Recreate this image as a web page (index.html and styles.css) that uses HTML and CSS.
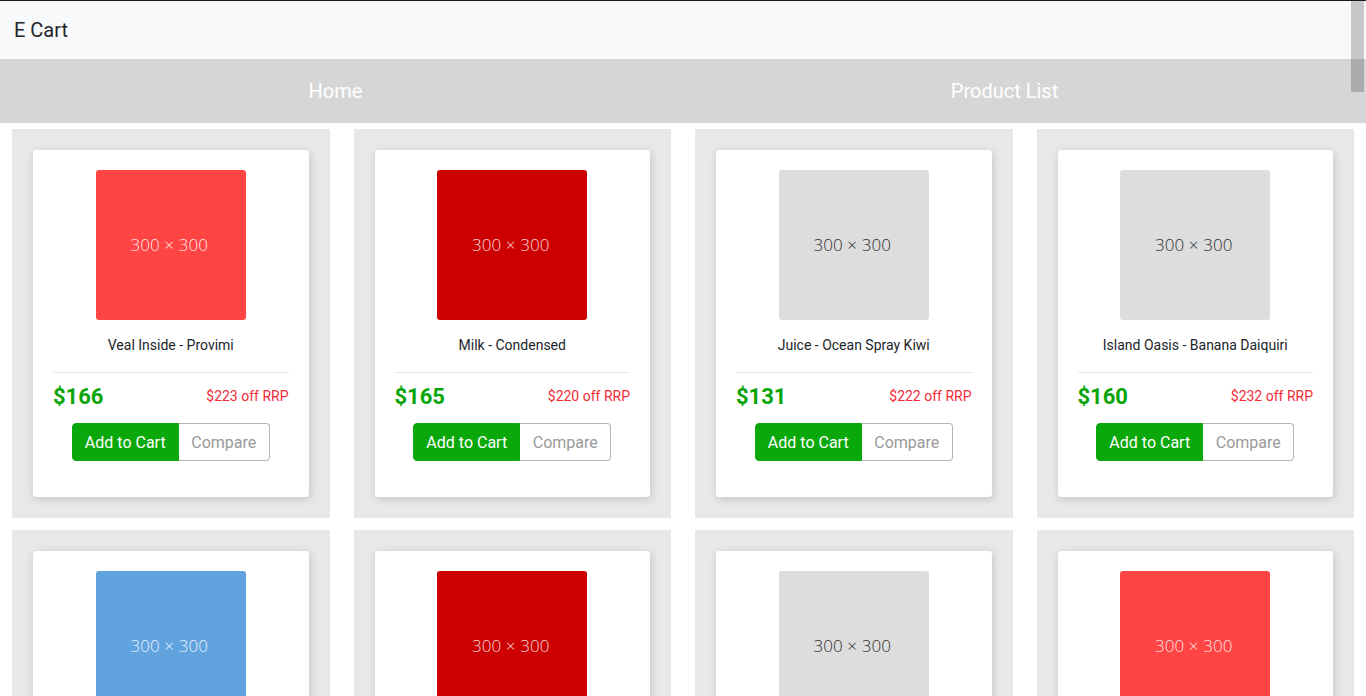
FILE: index.html
```html
<!DOCTYPE html>
<html lang="en">
<head>
<meta charset="utf-8">
<title>E Cart</title>
<link rel="stylesheet" href="styles.css">
</head>
<body>
<div class="top-line"></div>
<header class="navbar">
  <span class="brand">E Cart</span>
</header>
<nav class="menu">
  <a class="menu-item" href="#">Home</a>
  <a class="menu-item" href="#">Product List</a>
</nav>
<div class="scroll-overlay"></div>
<main class="products">
  <div class="tile"><div class="card">
    <div class="thumb thumb-red">300 × 300</div>
    <div class="title">Veal Inside - Provimi</div>
    <div class="divider"></div>
    <div class="price-row"><span class="price">$166</span><span class="off">$223 off RRP</span></div>
    <div class="btns"><button class="btn-cart">Add to Cart</button><button class="btn-compare">Compare</button></div>
  </div></div>
  <div class="tile"><div class="card">
    <div class="thumb thumb-dark">300 × 300</div>
    <div class="title">Milk - Condensed</div>
    <div class="divider"></div>
    <div class="price-row"><span class="price">$165</span><span class="off">$220 off RRP</span></div>
    <div class="btns"><button class="btn-cart">Add to Cart</button><button class="btn-compare">Compare</button></div>
  </div></div>
  <div class="tile"><div class="card">
    <div class="thumb thumb-gray">300 × 300</div>
    <div class="title">Juice - Ocean Spray Kiwi</div>
    <div class="divider"></div>
    <div class="price-row"><span class="price">$131</span><span class="off">$222 off RRP</span></div>
    <div class="btns"><button class="btn-cart">Add to Cart</button><button class="btn-compare">Compare</button></div>
  </div></div>
  <div class="tile"><div class="card">
    <div class="thumb thumb-gray">300 × 300</div>
    <div class="title">Island Oasis - Banana Daiquiri</div>
    <div class="divider"></div>
    <div class="price-row"><span class="price">$160</span><span class="off">$232 off RRP</span></div>
    <div class="btns"><button class="btn-cart">Add to Cart</button><button class="btn-compare">Compare</button></div>
  </div></div>
  <div class="tile"><div class="card">
    <div class="thumb thumb-blue">300 × 300</div>
    <div class="title">Wine - Red, Merlot</div>
    <div class="divider"></div>
    <div class="price-row"><span class="price">$142</span><span class="off">$210 off RRP</span></div>
    <div class="btns"><button class="btn-cart">Add to Cart</button><button class="btn-compare">Compare</button></div>
  </div></div>
  <div class="tile"><div class="card">
    <div class="thumb thumb-dark">300 × 300</div>
    <div class="title">Bread - Multigrain</div>
    <div class="divider"></div>
    <div class="price-row"><span class="price">$118</span><span class="off">$205 off RRP</span></div>
    <div class="btns"><button class="btn-cart">Add to Cart</button><button class="btn-compare">Compare</button></div>
  </div></div>
  <div class="tile"><div class="card">
    <div class="thumb thumb-gray">300 × 300</div>
    <div class="title">Cheese - Cheddar</div>
    <div class="divider"></div>
    <div class="price-row"><span class="price">$150</span><span class="off">$228 off RRP</span></div>
    <div class="btns"><button class="btn-cart">Add to Cart</button><button class="btn-compare">Compare</button></div>
  </div></div>
  <div class="tile"><div class="card">
    <div class="thumb thumb-red">300 × 300</div>
    <div class="title">Pasta - Penne</div>
    <div class="divider"></div>
    <div class="price-row"><span class="price">$127</span><span class="off">$219 off RRP</span></div>
    <div class="btns"><button class="btn-cart">Add to Cart</button><button class="btn-compare">Compare</button></div>
  </div></div>
</main>
</body>
</html>
```
FILE: styles.css
```css
html, body {
  margin: 0;
  padding: 0;
  overflow: hidden;
  background: #ffffff;
  font-family: Roboto, "Liberation Sans", Arial, sans-serif;
  color: #212529;
}

.top-line {
  height: 1px;
  background: #1b1b1b;
}

.navbar {
  height: 58px;
  background: #f8f9fa;
  display: flex;
  align-items: center;
  padding-left: 14px;
}

.brand {
  font-size: 20px;
  line-height: 24px;
  color: #212529;
}

.menu {
  height: 64px;
  background: #d6d6d6;
  display: grid;
  grid-template-columns: 669px 669px;
  padding-left: 1px;
  align-items: center;
}

.menu-item {
  text-align: center;
  color: #ffffff;
  font-size: 20px;
  line-height: 24px;
  text-decoration: none;
}

.scroll-overlay {
  position: absolute;
  top: 1px;
  left: 1351px;
  width: 13px;
  height: 91px;
  background: rgba(0, 0, 0, 0.2);
}

.products {
  display: grid;
  grid-template-columns: repeat(4, 1fr);
  column-gap: 24px;
  row-gap: 12px;
  margin: 6px 12px 0 12px;
}

.tile {
  background: #e8e8e8;
  padding: 21px;
}

.card {
  background: #ffffff;
  border-radius: 3px;
  box-shadow: 1px 2px 8px rgba(0, 0, 0, 0.16);
  padding: 20px 20px 36px 20px;
  display: flex;
  flex-direction: column;
  align-items: center;
}

.thumb {
  width: 150px;
  height: 150px;
  box-sizing: border-box;
  padding: 0 3px 2px 0;
  border-radius: 3px;
  display: flex;
  align-items: center;
  justify-content: center;
  font-family: "Open Sans", "DejaVu Sans", sans-serif;
  font-weight: 300;
  font-size: 17px;
  letter-spacing: 0.1px;
}

.thumb-red { background: #ff4444; color: rgba(255, 255, 255, 0.88); }
.thumb-dark { background: #cc0000; color: rgba(255, 255, 255, 0.85); }
.thumb-gray { background: #dddddd; color: #2e2e2e; }
.thumb-blue { background: #61a3de; color: rgba(255, 255, 255, 0.88); }

.title {
  margin-top: 15px;
  font-size: 14px;
  line-height: 20px;
  color: #212529;
  text-align: center;
}

.divider {
  align-self: stretch;
  margin-top: 17px;
  height: 1px;
  background: #e6e6e6;
}

.price-row {
  align-self: stretch;
  margin-top: 8px;
  height: 30px;
  display: flex;
  align-items: center;
  justify-content: space-between;
}

.price {
  font-size: 22px;
  font-weight: 700;
  color: #0aa50a;
}

.off {
  font-size: 14px;
  color: #f52a36;
}

.btns {
  margin-top: 12px;
  display: flex;
}

.btn-cart,
.btn-compare {
  font-family: Roboto, "Liberation Sans", Arial, sans-serif;
  font-size: 16px;
  height: 38px;
  margin: 0;
  cursor: pointer;
}

.btn-cart {
  background: #0aa80a;
  color: #ffffff;
  border: 1px solid #0aa80a;
  border-radius: 4px 0 0 4px;
  padding: 0 12px;
  width: 107px;
}

.btn-compare {
  background: #ffffff;
  color: #9a9a9a;
  border: 1px solid #b5b5b5;
  border-left: none;
  border-radius: 0 4px 4px 0;
  padding: 0 12px;
  width: 91px;
}
```
